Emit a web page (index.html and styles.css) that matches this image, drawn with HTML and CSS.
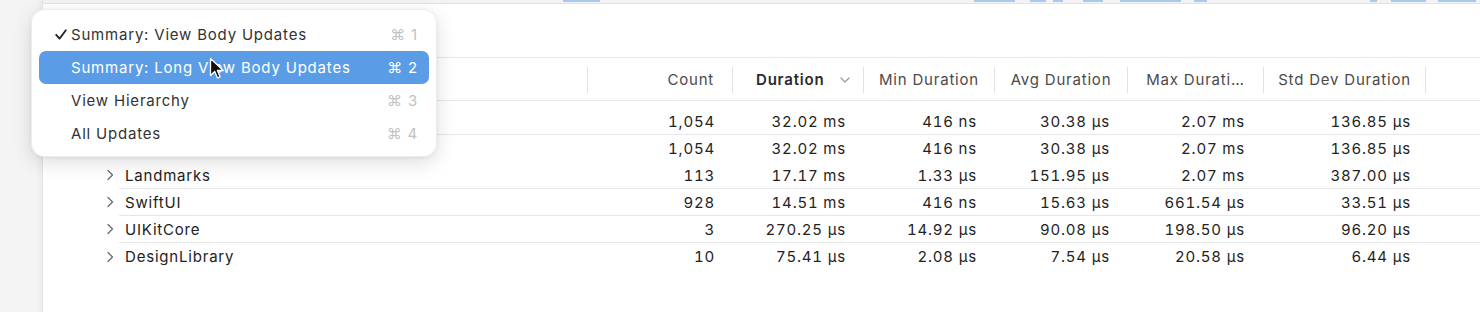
FILE: index.html
```html
<!DOCTYPE html>
<html lang="en">
<head>
    <meta charset="UTF-8">
    <title>View Body Summary</title>
    <link rel="stylesheet" href="styles.css">
</head>
<body>
    <div class="app">
        <aside class="sidebar"></aside>
        <main class="main">
            <div class="track">
                <span class="blip" style="margin-left:520px;width:37px"></span>
                <span class="blip" style="margin-left:374px;width:41px"></span>
                <span class="blip" style="margin-left:15px;width:16px"></span>
                <span class="blip" style="margin-left:7px;width:10px"></span>
                <span class="blip" style="margin-left:20px;width:20px"></span>
                <span class="blip" style="margin-left:17px;width:61px"></span>
                <span class="blip" style="margin-left:13px;width:13px"></span>
                <span class="blip" style="margin-left:163px;width:7px"></span>
                <span class="blip" style="margin-left:14px;width:35px"></span>
                <span class="blip" style="margin-left:12px;width:38px"></span>
            </div>
            <div class="toolbar"></div>

            <div class="table">
                <div class="row head">
                    <div class="cell name"></div>
                    <div class="cell num count-head">Count</div>
                    <div class="cell sorted">Duration
                        <svg class="sort-icon" width="10" height="6" viewBox="0 0 10 6"><path d="M1 1l4 4 4-4" fill="none" stroke="#9a9a9a" stroke-width="1.2" stroke-linecap="round" stroke-linejoin="round"/></svg>
                    </div>
                    <div class="cell center">Min Duration</div>
                    <div class="cell center">Avg Duration</div>
                    <div class="cell center">Max Durati…</div>
                    <div class="cell center">Std Dev Duration</div>
                    <div class="cell fill"></div>
                </div>

                <div class="body">
                    <div class="row lined level0">
                        <div class="cell name"></div>
                        <div class="cell num">1,054</div>
                        <div class="cell num">32.02 ms</div>
                        <div class="cell num">416 ns</div>
                        <div class="cell num">30.38 µs</div>
                        <div class="cell num">2.07 ms</div>
                        <div class="cell num">136.85 µs</div>
                        <div class="cell fill"></div>
                    </div>
                    <div class="row level1">
                        <div class="cell name"></div>
                        <div class="cell num">1,054</div>
                        <div class="cell num">32.02 ms</div>
                        <div class="cell num">416 ns</div>
                        <div class="cell num">30.38 µs</div>
                        <div class="cell num">2.07 ms</div>
                        <div class="cell num">136.85 µs</div>
                        <div class="cell fill"></div>
                    </div>
                    <div class="row lined level2">
                        <div class="cell name"><svg class="disclosure" width="8" height="12" viewBox="0 0 8 12"><path d="M2 1.5l4.5 4.5-4.5 4.5" fill="none" stroke="#6b6b6b" stroke-width="1.3" stroke-linecap="round" stroke-linejoin="round"/></svg>Landmarks</div>
                        <div class="cell num">113</div>
                        <div class="cell num">17.17 ms</div>
                        <div class="cell num">1.33 µs</div>
                        <div class="cell num">151.95 µs</div>
                        <div class="cell num">2.07 ms</div>
                        <div class="cell num">387.00 µs</div>
                        <div class="cell fill"></div>
                    </div>
                    <div class="row lined level2">
                        <div class="cell name"><svg class="disclosure" width="8" height="12" viewBox="0 0 8 12"><path d="M2 1.5l4.5 4.5-4.5 4.5" fill="none" stroke="#6b6b6b" stroke-width="1.3" stroke-linecap="round" stroke-linejoin="round"/></svg>SwiftUI</div>
                        <div class="cell num">928</div>
                        <div class="cell num">14.51 ms</div>
                        <div class="cell num">416 ns</div>
                        <div class="cell num">15.63 µs</div>
                        <div class="cell num">661.54 µs</div>
                        <div class="cell num">33.51 µs</div>
                        <div class="cell fill"></div>
                    </div>
                    <div class="row lined level2">
                        <div class="cell name"><svg class="disclosure" width="8" height="12" viewBox="0 0 8 12"><path d="M2 1.5l4.5 4.5-4.5 4.5" fill="none" stroke="#6b6b6b" stroke-width="1.3" stroke-linecap="round" stroke-linejoin="round"/></svg>UIKitCore</div>
                        <div class="cell num">3</div>
                        <div class="cell num">270.25 µs</div>
                        <div class="cell num">14.92 µs</div>
                        <div class="cell num">90.08 µs</div>
                        <div class="cell num">198.50 µs</div>
                        <div class="cell num">96.20 µs</div>
                        <div class="cell fill"></div>
                    </div>
                    <div class="row level2">
                        <div class="cell name"><svg class="disclosure" width="8" height="12" viewBox="0 0 8 12"><path d="M2 1.5l4.5 4.5-4.5 4.5" fill="none" stroke="#6b6b6b" stroke-width="1.3" stroke-linecap="round" stroke-linejoin="round"/></svg>DesignLibrary</div>
                        <div class="cell num">10</div>
                        <div class="cell num">75.41 µs</div>
                        <div class="cell num">2.08 µs</div>
                        <div class="cell num">7.54 µs</div>
                        <div class="cell num">20.58 µs</div>
                        <div class="cell num">6.44 µs</div>
                        <div class="cell fill"></div>
                    </div>
                </div>
            </div>
        </main>
    </div>

    <div class="menu">
        <div class="menu-item checked">
            <span class="check"><svg width="12" height="11" viewBox="0 0 12 11"><path d="M1.2 5.8l3.4 3.8L10.8 1.2" fill="none" stroke="#222" stroke-width="1.8" stroke-linecap="round" stroke-linejoin="round"/></svg></span>
            <span class="label">Summary: View Body Updates</span>
            <span class="shortcut">⌘ 1</span>
        </div>
        <div class="menu-item active">
            <span class="check"></span>
            <span class="label">Summary: Long View Body Updates</span>
            <span class="shortcut">⌘ 2</span>
        </div>
        <div class="menu-item">
            <span class="check"></span>
            <span class="label">View Hierarchy</span>
            <span class="shortcut">⌘ 3</span>
        </div>
        <div class="menu-item">
            <span class="check"></span>
            <span class="label">All Updates</span>
            <span class="shortcut">⌘ 4</span>
        </div>
    </div>

    <svg class="cursor" width="16" height="24" viewBox="0 0 16 24">
        <path d="M1.5 1.5v17l4.2-4 2.8 6.4 2.6-1.1-2.7-6.3h5.9z" fill="#111" stroke="#fff" stroke-width="1.3" stroke-linejoin="round"/>
    </svg>
</body>
</html>
```

FILE: styles.css
```css
* {
    padding: 0;
    margin: 0;
    box-sizing: border-box;
}

:root {
    --font-family: Inter, 'Liberation Sans', sans-serif;
    --line-color: #e7e7e7;
    --head-color: #4a4a4a;
    --text-color: #232323;
    --accent: #5a9de6;
}

body {
    width: 1480px;
    height: 312px;
    overflow: hidden;
    font-family: var(--font-family);
    font-size: 15px;
    letter-spacing: 0.8px;
    color: var(--text-color);
    background: #fff;
    position: relative;
}

.app {
    display: flex;
    height: 312px;
}

.sidebar {
    width: 43px;
    flex: none;
    background: #f4f4f4;
    border-right: 1px solid #e4e4e4;
    box-shadow: inset -6px 0 8px -6px rgba(0, 0, 0, 0.06);
}

.main {
    flex: 1;
    display: flex;
    flex-direction: column;
}

.track {
    display: flex;
    height: 4px;
    background: #f3f3f3;
    border-bottom: 1px solid #e2e2e2;
}

.blip {
    height: 2px;
    background: #a9c9ee;
}

.toolbar {
    height: 53px;
}

.table {
    border-top: 1px solid var(--line-color);
}

.row {
    --name: 545px;
    display: grid;
    grid-template-columns: var(--name) 145px 131px 131px 133px 136px 162px 1fr;
    align-items: center;
    height: 27px;
}

.row.head {
    height: 43px;
    padding-top: 2px;
    color: var(--head-color);
    border-bottom: 1px solid var(--line-color);
}

.row.head .cell {
    height: 26px;
    line-height: 26px;
    border-right: 1px solid #e2e2e2;
}

.row.head .cell.fill {
    border-right: none;
}

.body {
    padding-top: 7px;
}

.row.lined {
    border-bottom: 1px solid var(--line-color);
}

.level0 {
    --name: 505px;
    margin-left: 40px;
}

.level1 {
    --name: 485px;
    margin-left: 60px;
}

.level2 {
    --name: 469px;
    margin-left: 76px;
}

.cell {
    white-space: nowrap;
    overflow: hidden;
}

.cell.num {
    text-align: right;
    padding-right: 18px;
    font-variant-numeric: tabular-nums;
}

.row .cell.num:nth-child(6) {
    padding-right: 19px;
}

.row .cell.num:nth-child(7) {
    padding-right: 15px;
}

.count-head {
    padding-right: 15px;
}

.cell.center {
    text-align: center;
}

.cell.sorted {
    font-weight: 600;
    color: #2a2a2a;
    padding-left: 23px;
    display: flex;
    align-items: center;
}

.sort-icon {
    margin-left: 16px;
}

.cell.name {
    display: flex;
    align-items: center;
    color: #222;
    overflow: visible;
}

.disclosure {
    margin-left: -13px;
    margin-right: 11px;
}

.menu {
    position: absolute;
    left: 31px;
    top: 9px;
    width: 406px;
    height: 148px;
    padding: 8px 7px 7px;
    background: rgba(255, 255, 255, 0.98);
    border: 1px solid rgba(0, 0, 0, 0.07);
    border-radius: 14px;
    box-shadow: 0 6px 20px rgba(0, 0, 0, 0.13), 0 1px 4px rgba(0, 0, 0, 0.06);
}

.menu-item {
    display: flex;
    align-items: center;
    height: 33px;
    border-radius: 7px;
    color: #333;
}

.menu-item .check {
    display: flex;
    align-items: center;
    width: 32px;
    padding-left: 16px;
}

.menu-item .label {
    flex: 1;
}

.menu-item .shortcut {
    padding-right: 11px;
    color: #c2c2c2;
}

.menu-item.active {
    background: var(--accent);
    color: #fff;
}

.menu-item.active .shortcut {
    color: #fff;
}

.cursor {
    position: absolute;
    left: 209px;
    top: 57px;
}
```
